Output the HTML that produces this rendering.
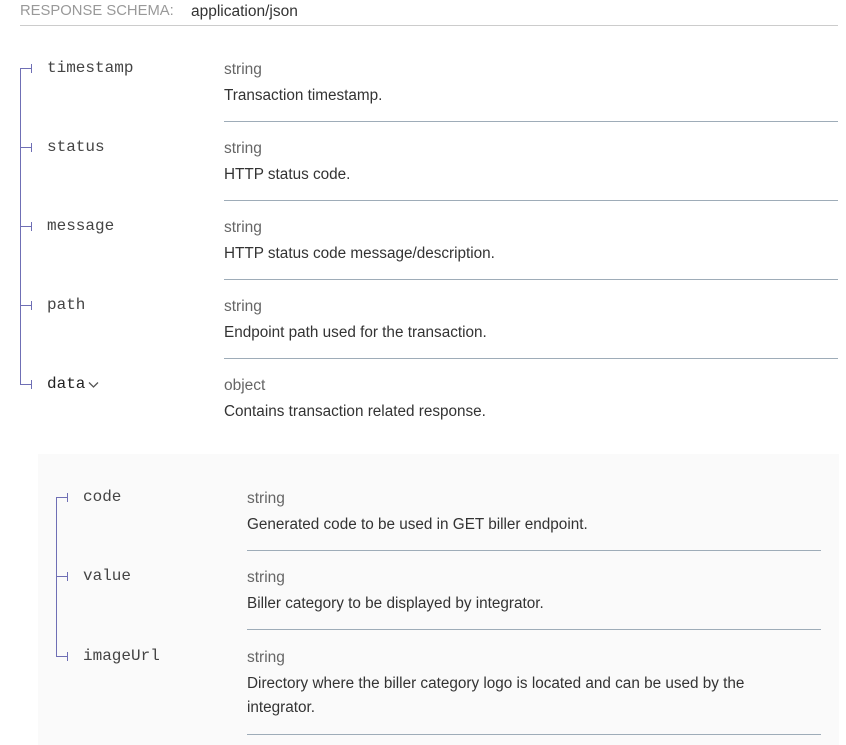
<!DOCTYPE html>
<html><head><meta charset="utf-8"><style>
body{margin:0;width:846px;height:745px;background:#fff;position:relative;overflow:hidden;font-family:"Liberation Sans",sans-serif}
.a{position:absolute;white-space:nowrap}
.nm{font-family:"Liberation Mono",monospace;font-size:16px;color:#444;line-height:18px}
.ty{font-size:15.5px;color:#666;line-height:18px}
.ds{font-size:15.3px;color:#333;line-height:20px}
.ln{position:absolute;background:#6f6fb5}
.sep{position:absolute;height:1px;background:#9eacb8}
</style></head><body>
<div class="a" style="left:20px;top:3px;font-size:14.8px;color:#999">RESPONSE SCHEMA:</div>
<div class="a" style="left:191px;top:3px;font-size:15.5px;color:#333">application/json</div>
<div class="sep" style="left:20px;top:25px;width:818px;background:#ccc"></div>

<div class="ln" style="left:20px;top:68px;width:1px;height:316px"></div>
<div class="ln" style="left:20px;top:68px;width:12px;height:1px"></div>
<div class="ln" style="left:31px;top:64px;width:1px;height:9px"></div>
<div class="ln" style="left:20px;top:147px;width:12px;height:1px"></div>
<div class="ln" style="left:31px;top:143px;width:1px;height:9px"></div>
<div class="ln" style="left:20px;top:226px;width:12px;height:1px"></div>
<div class="ln" style="left:31px;top:222px;width:1px;height:9px"></div>
<div class="ln" style="left:20px;top:305px;width:12px;height:1px"></div>
<div class="ln" style="left:31px;top:301px;width:1px;height:9px"></div>
<div class="ln" style="left:20px;top:384px;width:12px;height:1px"></div>
<div class="ln" style="left:31px;top:380px;width:1px;height:9px"></div>

<div class="a nm" style="left:47px;top:59px">timestamp</div>
<div class="a ty" style="left:224px;top:61px">string</div>
<div class="a ds" style="left:224px;top:86px">Transaction timestamp.</div>
<div class="sep" style="left:224px;top:121px;width:614px"></div>

<div class="a nm" style="left:47px;top:138px">status</div>
<div class="a ty" style="left:224px;top:140px">string</div>
<div class="a ds" style="left:224px;top:165px">HTTP status code.</div>
<div class="sep" style="left:224px;top:200px;width:614px"></div>

<div class="a nm" style="left:47px;top:217px">message</div>
<div class="a ty" style="left:224px;top:219px">string</div>
<div class="a ds" style="left:224px;top:244px">HTTP status code message/description.</div>
<div class="sep" style="left:224px;top:279px;width:614px"></div>

<div class="a nm" style="left:47px;top:296px">path</div>
<div class="a ty" style="left:224px;top:298px">string</div>
<div class="a ds" style="left:224px;top:323px">Endpoint path used for the transaction.</div>
<div class="sep" style="left:224px;top:358px;width:614px"></div>

<div class="a nm" style="left:47px;top:375px;color:#222">data</div>
<svg class="a" style="left:88px;top:381px" width="12" height="8"><path d="M1 1.5 L5.5 6 L10 1.5" stroke="#555" stroke-width="1.3" fill="none"/></svg>
<div class="a ty" style="left:224px;top:377px">object</div>
<div class="a ds" style="left:224px;top:402px">Contains transaction related response.</div>

<div class="a" style="left:38px;top:454px;width:801px;height:291px;background:#fafafa"></div>
<div class="ln" style="left:56px;top:497px;width:1px;height:160px"></div>
<div class="ln" style="left:56px;top:497px;width:12px;height:1px"></div>
<div class="ln" style="left:67px;top:493px;width:1px;height:9px"></div>
<div class="ln" style="left:56px;top:576px;width:12px;height:1px"></div>
<div class="ln" style="left:67px;top:572px;width:1px;height:9px"></div>
<div class="ln" style="left:56px;top:656px;width:12px;height:1px"></div>
<div class="ln" style="left:67px;top:652px;width:1px;height:9px"></div>

<div class="a nm" style="left:83px;top:488px">code</div>
<div class="a ty" style="left:247px;top:490px">string</div>
<div class="a ds" style="left:247px;top:515px">Generated code to be used in GET biller endpoint.</div>
<div class="sep" style="left:247px;top:550px;width:574px"></div>

<div class="a nm" style="left:83px;top:567px">value</div>
<div class="a ty" style="left:247px;top:569px">string</div>
<div class="a ds" style="left:247px;top:594px">Biller category to be displayed by integrator.</div>
<div class="sep" style="left:247px;top:629px;width:574px"></div>

<div class="a nm" style="left:83px;top:647px">imageUrl</div>
<div class="a ty" style="left:247px;top:649px">string</div>
<div class="a ds" style="left:247px;top:674px">Directory where the biller category logo is located and can be used by the</div>
<div class="a ds" style="left:247px;top:698px">integrator.</div>
<div class="sep" style="left:247px;top:734px;width:574px"></div>
</body></html>
